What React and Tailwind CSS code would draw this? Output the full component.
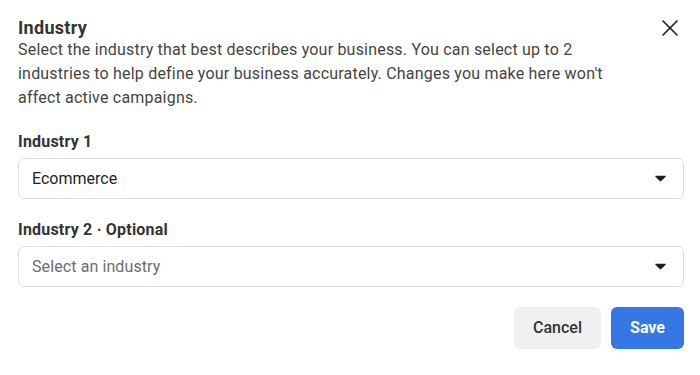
import { X } from 'lucide-react';

const FIELDS = [
  { id: 1, label: 'Industry 1', value: 'Ecommerce' },
  { id: 2, label: 'Industry 2 · Optional', value: null, placeholder: 'Select an industry' },
];

function Caret() {
  return (
    <svg width="11" height="7" viewBox="0 0 12 7" className="shrink-0">
      <path d="M0.8 0.5h10.4c0.5 0 0.8 0.6 0.4 1L6.5 6.4c-0.3 0.3-0.7 0.3-1 0L0.4 1.5C0 1.1 0.3 0.5 0.8 0.5z" fill="#1c1e21" />
    </svg>
  );
}

export default function App() {
  return (
    <div className="w-[700px] h-[375px] bg-white font-['Roboto','Liberation_Sans',sans-serif] text-[#1c1e21] pl-[18px] pr-4 pt-[18px]">
      <div className="flex items-start justify-between">
        <div className="w-[610px]">
          <h1 className="text-[18px] leading-5 font-bold tracking-[0.3px] text-[#333]">Industry</h1>
          <p className="text-[16px] leading-6 tracking-[0.2px] text-[#444]">
            Select the industry that best describes your business. You can select up to 2 industries to help define your business accurately. Changes you make here won't affect active campaigns.
          </p>
        </div>
        <button className="-mt-1 text-[#1c1e21]">
          <X size={28} strokeWidth={1.4} />
        </button>
      </div>

      <div className="mt-[22px] flex flex-col gap-[21px]">
        {FIELDS.map(f => (
          <div key={f.id}>
            <div className="text-[16px] leading-5 font-bold tracking-[0.2px] text-[#333]">{f.label}</div>
            <div className="mt-[6px] h-[41px] rounded-[6px] border border-[#dddfe2] flex items-center justify-between pl-[13px] pr-[17px]">
              {f.value ? (
                <span className="text-[16px] text-[#1c1e21]">{f.value}</span>
              ) : (
                <span className="text-[16px] tracking-[0.1px] text-[#6a6d71]">{f.placeholder}</span>
              )}
              <Caret />
            </div>
          </div>
        ))}
      </div>

      <div className="mt-5 flex justify-end gap-[10px]">
        <button className="h-[42px] w-[87px] rounded-[6px] bg-[#f0f0f0] text-[16px] font-medium text-[#333]">Cancel</button>
        <button className="h-[42px] w-[73px] rounded-[6px] bg-[#3578e5] text-[16px] font-bold text-white">Save</button>
      </div>
    </div>
  );
}
